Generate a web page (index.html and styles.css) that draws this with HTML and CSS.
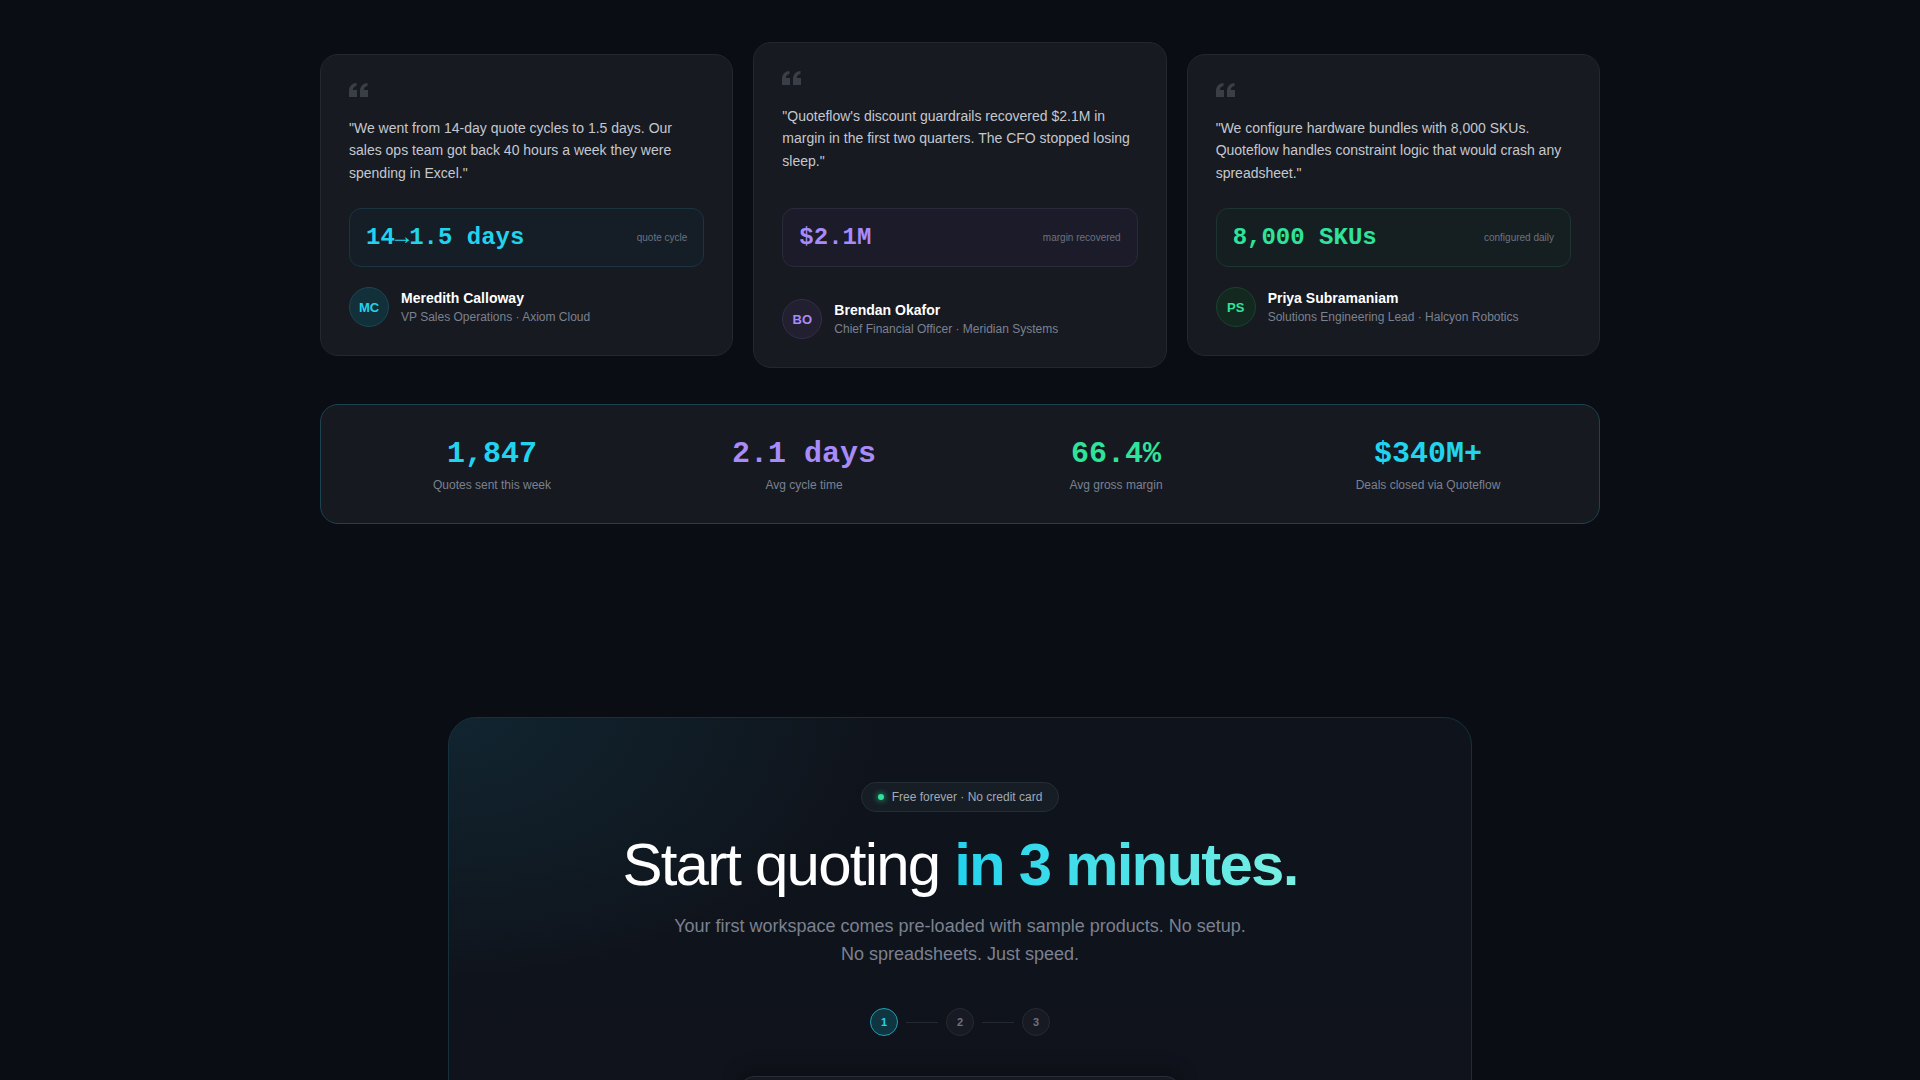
FILE: index.html
```html
<!DOCTYPE html>
<html lang="en">
<head>
  <meta charset="UTF-8">
  <meta name="viewport" content="width=device-width, initial-scale=1.0">
  <title>Quoteflow</title>
  <link rel="stylesheet" href="styles.css">
</head>
<body>
  <section class="proof">
    <div class="cards">
      <div class="card">
        <div class="card-top">
          <svg class="quote-mark" width="20" height="14" viewBox="0 0 20 14"><path d="M0 14V8C0 3.5 2.6 0.6 7.5 0v3C5 3.6 4 5 3.8 7H8v7zM11 14V8c0-4.5 2.6-7.4 7.5-8v3c-2.5.6-3.5 2-3.7 4H19v7z"/></svg>
          <p class="quote">"We went from 14-day quote cycles to 1.5 days. Our sales ops team got back 40 hours a week they were spending in Excel."</p>
        </div>
        <div class="metric cyan">
          <span class="metric-value">14→1.5 days</span>
          <span class="metric-label">quote cycle</span>
        </div>
        <div class="author">
          <div class="avatar cyan">MC</div>
          <div>
            <div class="name">Meredith Calloway</div>
            <div class="role">VP Sales Operations · Axiom Cloud</div>
          </div>
        </div>
      </div>

      <div class="card featured">
        <div class="card-top">
          <svg class="quote-mark" width="20" height="14" viewBox="0 0 20 14"><path d="M0 14V8C0 3.5 2.6 0.6 7.5 0v3C5 3.6 4 5 3.8 7H8v7zM11 14V8c0-4.5 2.6-7.4 7.5-8v3c-2.5.6-3.5 2-3.7 4H19v7z"/></svg>
          <p class="quote">"Quoteflow's discount guardrails recovered $2.1M in margin in the first two quarters. The CFO stopped losing sleep."</p>
        </div>
        <div class="metric purple">
          <span class="metric-value">$2.1M</span>
          <span class="metric-label">margin recovered</span>
        </div>
        <div class="author">
          <div class="avatar purple">BO</div>
          <div>
            <div class="name">Brendan Okafor</div>
            <div class="role">Chief Financial Officer · Meridian Systems</div>
          </div>
        </div>
      </div>

      <div class="card">
        <div class="card-top">
          <svg class="quote-mark" width="20" height="14" viewBox="0 0 20 14"><path d="M0 14V8C0 3.5 2.6 0.6 7.5 0v3C5 3.6 4 5 3.8 7H8v7zM11 14V8c0-4.5 2.6-7.4 7.5-8v3c-2.5.6-3.5 2-3.7 4H19v7z"/></svg>
          <p class="quote">"We configure hardware bundles with 8,000 SKUs. Quoteflow handles constraint logic that would crash any spreadsheet."</p>
        </div>
        <div class="metric green">
          <span class="metric-value">8,000 SKUs</span>
          <span class="metric-label">configured daily</span>
        </div>
        <div class="author">
          <div class="avatar green">PS</div>
          <div>
            <div class="name">Priya Subramaniam</div>
            <div class="role">Solutions Engineering Lead · Halcyon Robotics</div>
          </div>
        </div>
      </div>
    </div>

    <div class="stats">
      <div class="stat">
        <div class="stat-value cyan">1,847</div>
        <div class="stat-label">Quotes sent this week</div>
      </div>
      <div class="stat">
        <div class="stat-value purple">2.1 days</div>
        <div class="stat-label">Avg cycle time</div>
      </div>
      <div class="stat">
        <div class="stat-value green">66.4%</div>
        <div class="stat-label">Avg gross margin</div>
      </div>
      <div class="stat">
        <div class="stat-value cyan">$340M+</div>
        <div class="stat-label">Deals closed via Quoteflow</div>
      </div>
    </div>
  </section>

  <section class="cta-section">
    <div class="cta">
      <div class="pill"><span class="dot"></span>Free forever · No credit card</div>
      <h2>Start quoting <span class="grad">in 3 minutes.</span></h2>
      <p class="sub">Your first workspace comes pre-loaded with sample products. No setup. No spreadsheets. Just speed.</p>

      <div class="steps">
        <span class="step active">1</span>
        <span class="step-line"></span>
        <span class="step">2</span>
        <span class="step-line"></span>
        <span class="step">3</span>
      </div>

      <form class="signup">
        <input type="email" id="email" aria-label="Work email">
        <input type="text" id="company" aria-label="Company">
      </form>
    </div>
  </section>
</body>
</html>
```

FILE: styles.css
```css
body {
  margin: 0;
  background: #0a0d14;
  font-family: "Liberation Sans", Arial, sans-serif;
  color: #e5e7eb;
}
.proof {
  max-width: 1280px;
  margin: 0 auto;
  padding-top: 54px;
}
.cards {
  display: grid;
  grid-template-columns: repeat(3, 1fr);
  gap: 20px;
}
.card {
  display: flex;
  flex-direction: column;
  justify-content: space-between;
  background: #171a21;
  border: 1px solid #23272f;
  border-radius: 18px;
  padding: 28px;
}
.card.featured {
  margin: -12px 0;
}
.quote-mark {
  display: block;
  fill: #3a3e47;
  margin-bottom: 20px;
}
.quote {
  margin: 0;
  font-size: 14px;
  line-height: 1.6;
  color: #c5c8cf;
}
.metric {
  display: flex;
  justify-content: space-between;
  align-items: center;
  margin-top: 24px;
  padding: 14px 16px;
  border-radius: 12px;
  border: 1px solid;
}
.metric-value {
  font-family: "Liberation Mono", "Courier New", monospace;
  font-size: 24px;
  font-weight: 700;
  line-height: 29px;
}
.metric-label {
  font-size: 10px;
  color: #6b7280;
}
.metric.cyan {
  background: #151e26;
  border-color: #1c3440;
}
.metric.purple {
  background: #1b1b29;
  border-color: #2b2a3c;
}
.metric.green {
  background: #151f22;
  border-color: #1c3530;
}
.cyan { color: #22d3ee; }
.purple { color: #a78bfa; }
.green { color: #2fe39b; }
.author {
  display: flex;
  align-items: center;
  gap: 12px;
  margin-top: 20px;
}
.avatar {
  width: 38px;
  height: 38px;
  border-radius: 50%;
  border: 1px solid;
  display: flex;
  align-items: center;
  justify-content: center;
  font-size: 13px;
  font-weight: 700;
  flex-shrink: 0;
}
.avatar.cyan {
  background: #12303a;
  border-color: #1b4652;
}
.avatar.purple {
  background: #221f31;
  border-color: #332e4a;
}
.avatar.green {
  background: #13291f;
  border-color: #1a4230;
}
.name {
  font-size: 14px;
  font-weight: 700;
  color: #ffffff;
  line-height: 18px;
}
.role {
  font-size: 12px;
  color: #7b8190;
  line-height: 16px;
  margin-top: 2px;
}
.stats {
  display: grid;
  grid-template-columns: repeat(4, 1fr);
  margin-top: 48px;
  padding: 31px 15px 29px;
  background: #161920;
  border: 1px solid #1b4450;
  border-radius: 18px;
  text-align: center;
}
.stat-value {
  font-family: "Liberation Mono", "Courier New", monospace;
  font-size: 30px;
  font-weight: 700;
  line-height: 36px;
}
.stat-label {
  font-size: 12px;
  color: #7b8190;
  line-height: 18px;
  margin-top: 4px;
}
.cta-section {
  padding-top: 193px;
}
.cta {
  max-width: 1024px;
  box-sizing: border-box;
  margin: 0 auto;
  padding: 64px 48px;
  border: 1px solid #15323c;
  border-radius: 28px;
  background:
    radial-gradient(ellipse 60% 70% at 0% 0%, rgba(20, 80, 100, 0.28), transparent 70%),
    linear-gradient(180deg, #0f141c 0%, #0f121a 100%);
  text-align: center;
}
.pill {
  display: inline-flex;
  align-items: center;
  gap: 8px;
  padding: 6px 16px;
  font-size: 12px;
  line-height: 16px;
  color: #a3a9b3;
  background: #161d24;
  border: 1px solid #252e37;
  border-radius: 999px;
}
.dot {
  width: 6px;
  height: 6px;
  border-radius: 50%;
  background: #2fe39b;
  box-shadow: 0 0 6px #2fe39b;
}
h2 {
  margin: 20px 0 0;
  font-size: 60px;
  line-height: 1.1;
  font-weight: 400;
  letter-spacing: -0.03em;
  color: #ffffff;
}
.grad {
  font-weight: 700;
  background: linear-gradient(90deg, #22d3ee 0%, #7af0e2 100%);
  -webkit-background-clip: text;
  background-clip: text;
  color: transparent;
}
.sub {
  max-width: 580px;
  margin: 14px auto 0;
  font-size: 18px;
  line-height: 28px;
  color: #7b8190;
}
.steps {
  display: flex;
  justify-content: center;
  align-items: center;
  gap: 8px;
  margin-top: 40px;
}
.step {
  width: 26px;
  height: 26px;
  border-radius: 50%;
  border: 1px solid #262a33;
  background: #171a22;
  color: #6b7280;
  font-size: 11px;
  font-weight: 700;
  display: flex;
  align-items: center;
  justify-content: center;
}
.step.active {
  background: #0f3540;
  border-color: #1f9fb5;
  color: #22d3ee;
}
.step-line {
  width: 32px;
  height: 1px;
  background: #252932;
}
.signup {
  max-width: 440px;
  box-sizing: border-box;
  margin: 40px auto 0;
  padding: 24px;
  display: flex;
  flex-direction: column;
  gap: 12px;
  background: #171922;
  border: 1px solid #2a2d38;
  border-radius: 14px;
  box-shadow: 0 -4px 20px rgba(0, 0, 0, 0.3);
}
.signup input {
  padding: 10px 12px;
  background: #0f1118;
  border: 1px solid #2a2d38;
  border-radius: 8px;
  color: #e5e7eb;
}
```
